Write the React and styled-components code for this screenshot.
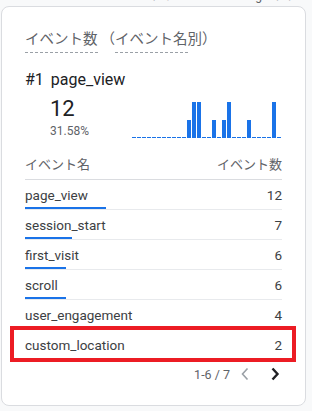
import React from "react";
import styled, { createGlobalStyle } from "styled-components";

const GlobalStyle = createGlobalStyle`
  body {
    margin: 0;
    background: #f8f9fa;
    font-family: Roboto, "Noto Sans CJK JP", sans-serif;
  }
`;

const TopStrip = styled.div`
  height: 6px;
  overflow: hidden;
  display: flex;
  justify-content: flex-end;
  padding-right: 2px;
  color: #5f6368;
  font-size: 12px;
  line-height: 14px;
  white-space: nowrap;

  span {
    margin-top: -11px;
  }
`;

const Card = styled.div`
  box-sizing: border-box;
  margin-left: 1px;
  width: 305px;
  height: 400px;
  background: #fff;
  border: 1px solid #dadce0;
  border-radius: 8px;
  padding: 23px 23px 0 23px;
  display: flex;
  flex-direction: column;
`;

const Title = styled.div`
  display: flex;
  font-size: 14.5px;
  line-height: 20px;
  color: #5f6368;
  height: 24px;
`;

const Dotted = styled.span`
  display: inline-block;
  height: 22px;
  border-bottom: 1px dashed #9aa0a6;
`;

const Paren = styled.span`
  margin-left: ${(p) => p.$shift || 0}px;
`;

const TopItem = styled.div`
  margin-top: 15px;
  display: flex;
  gap: 7px;
  font-size: 16px;
  line-height: 22px;
  color: #202124;
`;

const StatsRow = styled.div`
  display: flex;
  align-items: flex-end;
  margin-top: 3px;
`;

const StatsText = styled.div`
  display: flex;
  flex-direction: column;
  padding-left: 25px;
  width: 107px;
  box-sizing: border-box;
`;

const BigNumber = styled.div`
  font-size: 22px;
  line-height: 26px;
  color: #202124;
  margin-top: 2px;
`;

const Percent = styled.div`
  margin-top: 1px;
  font-size: 12px;
  line-height: 16px;
  color: #5f6368;
`;

const Chart = styled.div`
  display: flex;
  align-items: flex-end;
  height: 36px;
  margin-bottom: 1px;
`;

const Bar = styled.div`
  width: 4px;
  margin-right: 1px;
  height: ${(p) => (p.$value ? p.$value * 18 : 1)}px;
  background: #1a73e8;
`;

const Table = styled.div`
  margin-top: 17px;
  display: flex;
  flex-direction: column;
`;

const HeaderRow = styled.div`
  display: flex;
  justify-content: space-between;
  font-size: 13px;
  line-height: 18px;
  color: #5f6368;
  padding-bottom: 5px;
  border-bottom: 1px solid #dadce0;
`;

const Row = styled.div`
  position: relative;
  display: flex;
  flex-direction: column;
  padding-top: 5px;
  border-bottom: 1px solid ${(p) => (p.$last ? "transparent" : "#e8eaed")};

  ${(p) =>
    p.$highlight &&
    `
    &::after {
      content: "";
      position: absolute;
      top: -4px;
      bottom: -3px;
      left: -15px;
      right: -14px;
      border: 4px solid #ec1c24;
    }
  `}
`;

const RowLine = styled.div`
  display: flex;
  justify-content: space-between;
  font-size: 13.5px;
  line-height: 20px;
  color: #3c4043;
`;

const ShareBar = styled.div`
  margin-top: 2px;
  height: 2px;
  background: #1a73e8;
`;

const Pager = styled.div`
  display: flex;
  justify-content: flex-end;
  align-items: center;
  height: 28px;
  font-size: 12.5px;
  color: #5f6368;
`;

const PagerLabel = styled.span`
  margin-right: 8px;
`;

const PagerButton = styled.span`
  display: flex;
  width: 14px;
  justify-content: center;
  margin-left: ${(p) => p.$gap || 0}px;
`;

const chart = Array.from({ length: 30 }, () => 0);
chart[11] = 1;
chart[12] = 2;
chart[13] = 2;
chart[16] = 1;
chart[18] = 1;
chart[19] = 2;
chart[23] = 1;
chart[28] = 2;

const events = [
  { name: "page_view", count: 12 },
  { name: "session_start", count: 7 },
  { name: "first_visit", count: 6 },
  { name: "scroll", count: 6 },
  { name: "user_engagement", count: 4 },
  { name: "custom_location", count: 2 },
];

const total = 38;

export default function App() {
  return (
    <>
      <GlobalStyle />
      <TopStrip>
        <span>ロパティ　›　GA4 - Google アナリ</span>
      </TopStrip>
      <Card>
        <Title>
          <Dotted>イベント数</Dotted>
          <Paren $shift={3}>（</Paren>
          <Dotted>イベント名</Dotted>
          <span>別）</span>
        </Title>
        <TopItem>
          <span>#1</span>
          <span>page_view</span>
        </TopItem>
        <StatsRow>
          <StatsText>
            <BigNumber>12</BigNumber>
            <Percent>31.58%</Percent>
          </StatsText>
          <Chart>
            {chart.map((v, i) => (
              <Bar key={i} $value={v} />
            ))}
          </Chart>
        </StatsRow>
        <Table>
          <HeaderRow>
            <span>イベント名</span>
            <span>イベント数</span>
          </HeaderRow>
          {events.map((ev, i) => (
            <Row key={ev.name} $highlight={i === 5} $last={i === 5}>
              <RowLine>
                <span>{ev.name}</span>
                <span>{ev.count}</span>
              </RowLine>
              <ShareBar style={{ width: i < 4 ? `${(ev.count / total) * 100}%` : 0 }} />
            </Row>
          ))}
        </Table>
        <Pager>
          <PagerLabel>1-6 / 7</PagerLabel>
          <PagerButton>
            <svg width="10" height="14" viewBox="0 0 10 14">
              <path d="M7.5 1.5 L2.5 7 L7.5 12.5" fill="none" stroke="#9aa0a6" strokeWidth="1.6" />
            </svg>
          </PagerButton>
          <PagerButton $gap={16}>
            <svg width="10" height="14" viewBox="0 0 10 14">
              <path d="M2.5 1.5 L7.5 7 L2.5 12.5" fill="none" stroke="#202124" strokeWidth="2.4" />
            </svg>
          </PagerButton>
        </Pager>
      </Card>
    </>
  );
}
